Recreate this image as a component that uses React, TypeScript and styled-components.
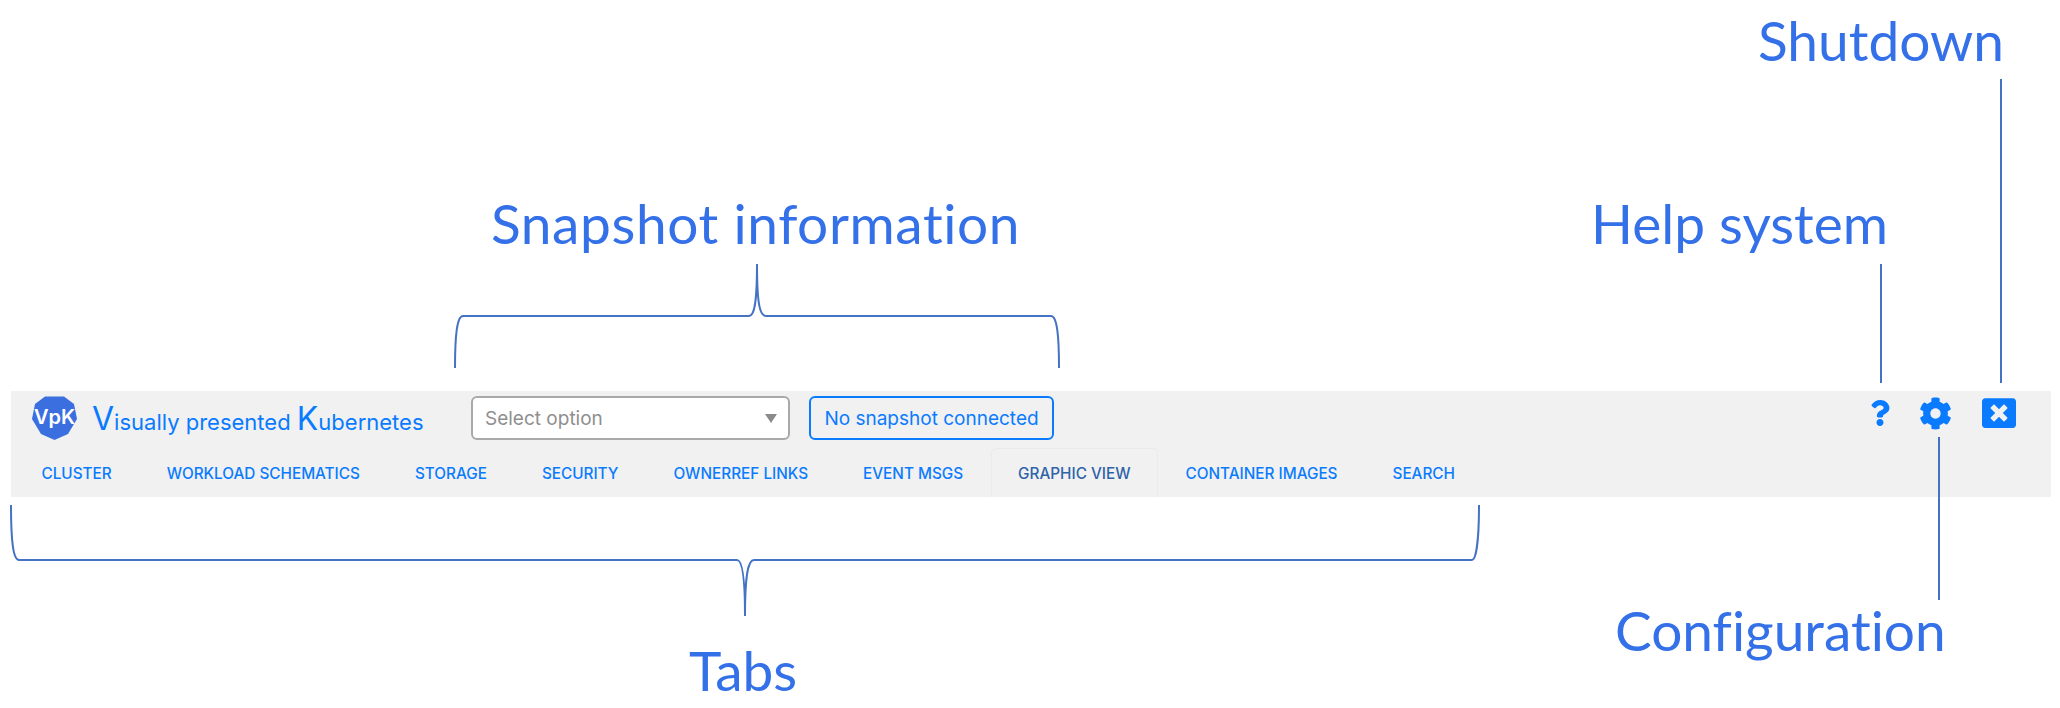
import React from 'react'
import styled, { createGlobalStyle } from 'styled-components'
import { FaCog, FaQuestion, FaWindowClose } from 'react-icons/fa'

const tabs = [
  'Cluster',
  'Workload Schematics',
  'Storage',
  'Security',
  'OwnerRef Links',
  'Event Msgs',
  'Graphic View',
  'Container Images',
  'Search'
]

const callouts = [
  { text: 'Shutdown', left: 1758, top: 5, spacing: 0 },
  { text: 'Snapshot information', left: 491, top: 188, spacing: 0.6 },
  { text: 'Help system', left: 1591, top: 188, spacing: 0 },
  { text: 'Configuration', left: 1615, top: 595, spacing: 0 },
  { text: 'Tabs', left: 689, top: 635, spacing: 0 }
]

const GlobalStyle = createGlobalStyle`
  html, body {
    margin: 0;
    background: #fff;
    font-family: Inter, "Liberation Sans", sans-serif;
  }
`

const Page = styled.div`
  position: relative;
  width: 2060px;
  height: 708px;
  box-sizing: border-box;
  padding: 391px 9px 0 11px;
  overflow: hidden;
`

const Toolbar = styled.header`
  height: 106px;
  background: #f1f1f1;
  display: flex;
  flex-direction: column;
`

const TopRow = styled.div`
  height: 57px;
  box-sizing: border-box;
  display: flex;
  align-items: flex-start;
  padding: 5px 35px 0 21px;
`

const Brand = styled.div`
  display: flex;
  align-items: center;
  width: 439px;
  height: 44px;
  gap: 15px;
`

const Title = styled.span`
  font-size: 22px;
  color: #0a7bff;
  white-space: nowrap;
`

const BigLetter = styled.span`
  font-size: 32px;
`

const SelectBox = styled.div`
  width: 319px;
  height: 44px;
  box-sizing: border-box;
  background: #fff;
  border: 2px solid #a9a9a9;
  border-radius: 6px;
  display: flex;
  align-items: center;
  justify-content: space-between;
  padding: 0 11px 0 12px;
  font-size: 19px;
  color: #8f8f8f;
`

const Caret = styled.span`
  width: 0;
  height: 0;
  border-left: 6px solid transparent;
  border-right: 6px solid transparent;
  border-top: 9px solid #8a8a8a;
`

const SnapshotButton = styled.div`
  width: 245px;
  height: 44px;
  margin-left: 19px;
  box-sizing: border-box;
  border: 2px solid #0a7bff;
  border-radius: 6px;
  display: flex;
  align-items: center;
  justify-content: center;
  font-size: 19px;
  color: #0a7bff;
`

const IconGroup = styled.div`
  margin-left: auto;
  display: flex;
  align-items: center;
  height: 34px;
  gap: 30px;
  color: #0a7bff;
`

const HelpIcon = styled(FaQuestion)`
  margin-right: -4px;
`

const TabRow = styled.nav`
  flex: 1;
  display: flex;
  align-items: stretch;
  padding-left: 3px;
`

const Tab = styled.div<{ $active?: boolean }>`
  display: flex;
  align-items: center;
  box-sizing: border-box;
  padding: 0 26.5px;
  font-size: 15.3px;
  font-weight: 500;
  text-transform: uppercase;
  white-space: nowrap;
  color: ${({ $active }) => ($active ? '#2f63a8' : '#0a7bff')};
  border: 1px solid ${({ $active }) => ($active ? '#e8eaee' : 'transparent')};
  border-bottom: none;
  border-radius: 5px 5px 0 0;
`

const Callout = styled.div<{ $left: number; $top: number; $spacing: number }>`
  position: absolute;
  left: ${({ $left }) => $left}px;
  top: ${({ $top }) => $top}px;
  font-family: Lato, "Open Sans", sans-serif;
  font-size: 55px;
  font-variant-ligatures: none;
  letter-spacing: ${({ $spacing }) => $spacing}px;
  line-height: 70px;
  color: #3470e8;
  white-space: nowrap;
`

const Leaders = styled.svg`
  position: absolute;
  left: 0;
  top: 0;
  pointer-events: none;
`

function Logo() {
  return (
    <svg width="45" height="44" viewBox="0 0 45 44">
      <path d="M13 0.5H32L42 8L45 23L36 38L22.5 44L9 38L0 23L3 8Z" fill="#3b6fe0" />
      <text x="22.5" y="28" textAnchor="middle" fontFamily="Inter, sans-serif" fontSize="20" fontWeight="600" fill="#fff">
        VpK
      </text>
    </svg>
  )
}

export default function App() {
  return (
    <Page>
      <GlobalStyle />
      <Toolbar>
        <TopRow>
          <Brand>
            <Logo />
            <Title>
              <BigLetter>V</BigLetter>isually presented <BigLetter>K</BigLetter>ubernetes
            </Title>
          </Brand>
          <SelectBox>
            Select option
            <Caret />
          </SelectBox>
          <SnapshotButton>No snapshot connected</SnapshotButton>
          <IconGroup>
            <HelpIcon size={26} />
            <FaCog size={33} />
            <FaWindowClose size={34} />
          </IconGroup>
        </TopRow>
        <TabRow>
          {tabs.map(tab => (
            <Tab key={tab} $active={tab === 'Graphic View'}>
              {tab}
            </Tab>
          ))}
        </TabRow>
      </Toolbar>

      {callouts.map(c => (
        <Callout key={c.text} $left={c.left} $top={c.top} $spacing={c.spacing}>
          {c.text}
        </Callout>
      ))}

      <Leaders width="2060" height="708" fill="none" stroke="#4472c4" strokeWidth="2">
        <path d="M2001 79V383" />
        <path d="M1881 264V383" />
        <path d="M1939 437V600" />
        <path d="M455 368C455 335 457 316 463 316H749C754 316 757 305 757 264C757 305 760 316 766 316H1051C1057 316 1059 335 1059 368" />
        <path d="M11 505C11 540 13 560 19 560H737C742 560 745 575 745 616C745 575 748 560 754 560H1472C1476 560 1479 540 1479 505" />
      </Leaders>
    </Page>
  )
}
